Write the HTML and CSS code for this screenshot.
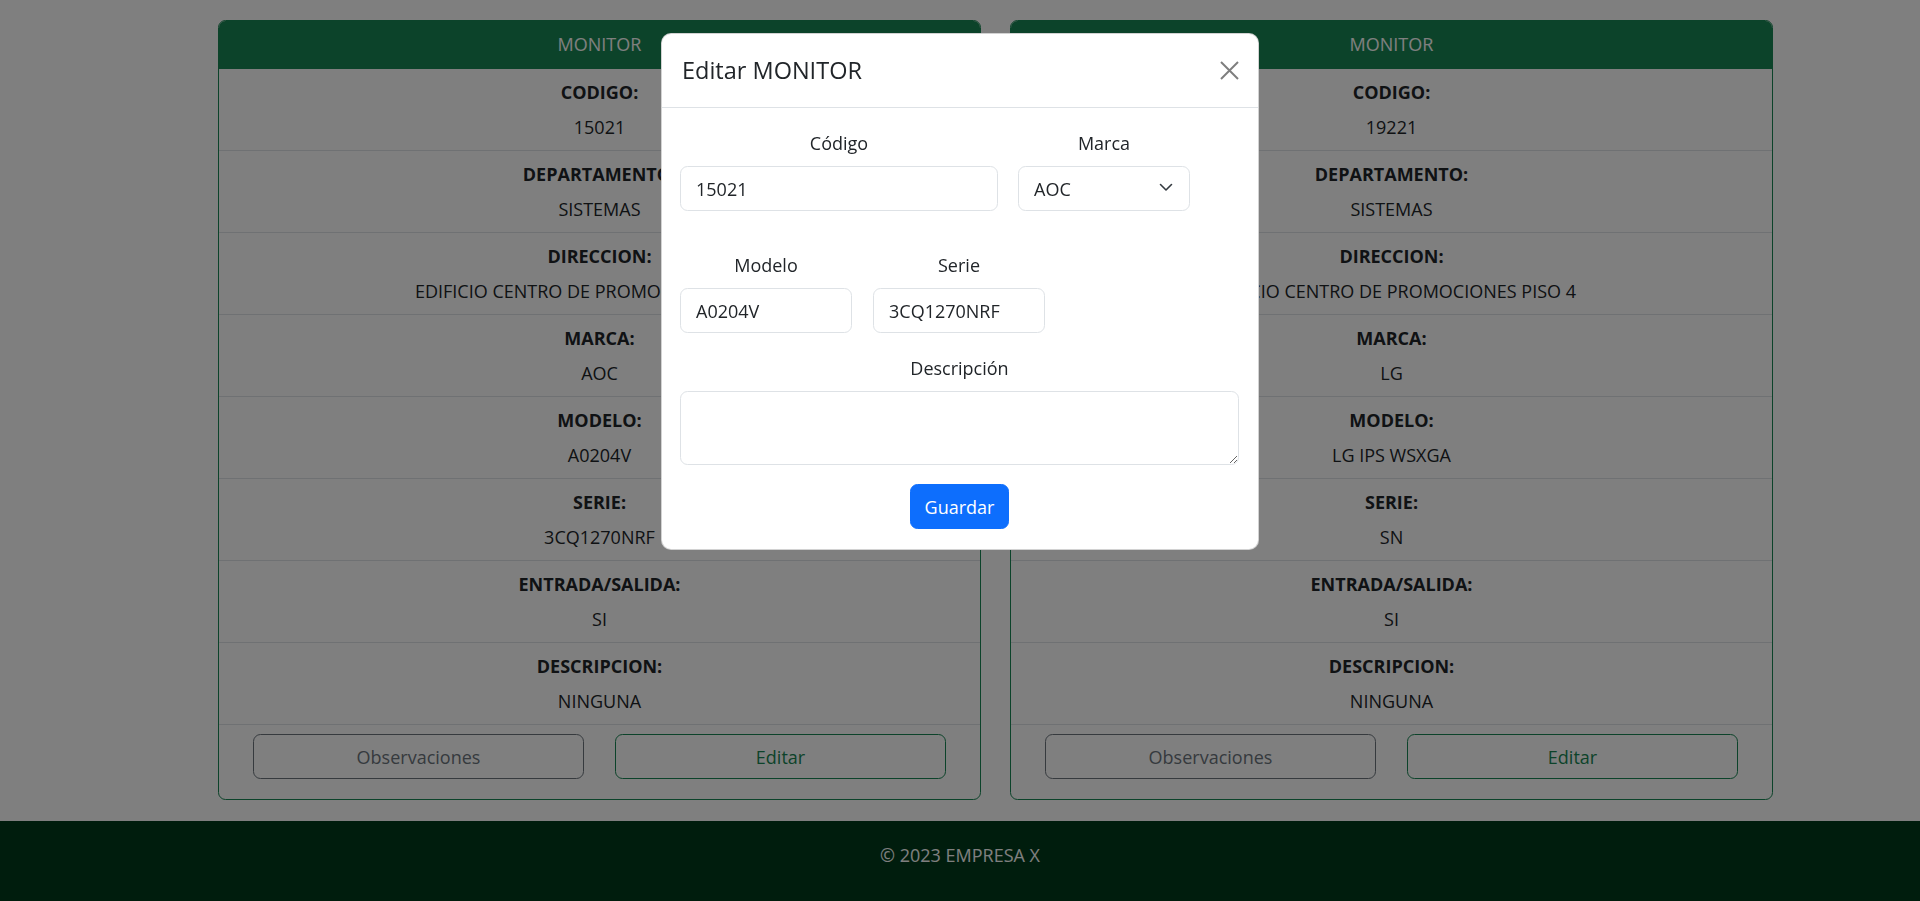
FILE: index.html
```html
<!DOCTYPE html>
<html lang="es">
<head>
<meta charset="utf-8">
<title>Equipos</title>
<link rel="stylesheet" href="styles.css">
</head>
<body>
<main class="page">
  <div class="cards">
    <section class="card">
      <header class="card-header">MONITOR</header>
      <ul class="fields">
        <li class="field"><span class="field-label">CODIGO:</span><span class="field-value">15021</span></li>
        <li class="field"><span class="field-label">DEPARTAMENTO:</span><span class="field-value">SISTEMAS</span></li>
        <li class="field"><span class="field-label">DIRECCION:</span><span class="field-value">EDIFICIO CENTRO DE PROMOCIONES PISO 4</span></li>
        <li class="field"><span class="field-label">MARCA:</span><span class="field-value">AOC</span></li>
        <li class="field"><span class="field-label">MODELO:</span><span class="field-value">A0204V</span></li>
        <li class="field"><span class="field-label">SERIE:</span><span class="field-value">3CQ1270NRF</span></li>
        <li class="field"><span class="field-label">ENTRADA/SALIDA:</span><span class="field-value">SI</span></li>
        <li class="field"><span class="field-label">DESCRIPCION:</span><span class="field-value">NINGUNA</span></li>
      </ul>
      <div class="card-actions">
        <button class="btn btn-outline-secondary" type="button">Observaciones</button>
        <button class="btn btn-outline-success" type="button">Editar</button>
      </div>
    </section>
    <section class="card">
      <header class="card-header">MONITOR</header>
      <ul class="fields">
        <li class="field"><span class="field-label">CODIGO:</span><span class="field-value">19221</span></li>
        <li class="field"><span class="field-label">DEPARTAMENTO:</span><span class="field-value">SISTEMAS</span></li>
        <li class="field"><span class="field-label">DIRECCION:</span><span class="field-value">EDIFICIO CENTRO DE PROMOCIONES PISO 4</span></li>
        <li class="field"><span class="field-label">MARCA:</span><span class="field-value">LG</span></li>
        <li class="field"><span class="field-label">MODELO:</span><span class="field-value">LG IPS WSXGA</span></li>
        <li class="field"><span class="field-label">SERIE:</span><span class="field-value">SN</span></li>
        <li class="field"><span class="field-label">ENTRADA/SALIDA:</span><span class="field-value">SI</span></li>
        <li class="field"><span class="field-label">DESCRIPCION:</span><span class="field-value">NINGUNA</span></li>
      </ul>
      <div class="card-actions">
        <button class="btn btn-outline-secondary" type="button">Observaciones</button>
        <button class="btn btn-outline-success" type="button">Editar</button>
      </div>
    </section>
  </div>
</main>
<footer class="site-footer">© 2023 EMPRESA X</footer>

<div class="backdrop"></div>
<div class="modal-wrap">
  <div class="modal">
    <div class="modal-header">
      <h5 class="modal-title">Editar MONITOR</h5>
      <button class="btn-close" type="button" aria-label="Cerrar">
        <svg width="19" height="19" viewBox="0 0 19 19"><path d="M1 1L18 18M18 1L1 18" stroke="#000" stroke-width="2" fill="none"/></svg>
      </button>
    </div>
    <form class="modal-body">
      <div class="form-row">
        <label class="form-group w-codigo"><span class="form-label">Código</span><input class="form-control" type="text" value="15021"></label>
        <label class="form-group w-small"><span class="form-label">Marca</span>
          <span class="select-wrap">
            <select class="form-control form-select"><option>AOC</option><option>LG</option></select>
            <svg class="chevron" width="14" height="9" viewBox="0 0 14 9"><path d="M1.5 1.5l5.5 5.5 5.5-5.5" fill="none" stroke="#343a40" stroke-width="1.6" stroke-linecap="round" stroke-linejoin="round"/></svg>
          </span>
        </label>
      </div>
      <div class="form-row row-gap-lg">
        <label class="form-group w-small"><span class="form-label">Modelo</span><input class="form-control" type="text" value="A0204V"></label>
        <label class="form-group w-small"><span class="form-label">Serie</span><input class="form-control" type="text" value="3CQ1270NRF"></label>
      </div>
      <label class="form-group form-full"><span class="form-label">Descripción</span><textarea class="form-control form-textarea"></textarea></label>
      <div class="form-submit"><button class="btn btn-primary" type="button">Guardar</button></div>
    </form>
  </div>
</div>
</body>
</html>
```
FILE: styles.css
```css
* { box-sizing: border-box; }
html, body { margin: 0; padding: 0; }
body {
  font-family: "Open Sans", "Noto Sans", sans-serif;
  font-size: 18px;
  line-height: 30px;
  color: #212529;
  background: #ffffff;
  min-height: 901px;
  display: flex;
  flex-direction: column;
}
.page { padding: 20px 0 21px 218px; }
.cards {
  display: grid;
  grid-template-columns: 763px 763px;
  column-gap: 29px;
}
.card {
  border: 1px solid #198754;
  border-radius: 7.5px;
  background: #fff;
  overflow: hidden;
}
.card-header {
  height: 48px;
  background: #198754;
  color: #fff;
  text-align: center;
  line-height: 47px;
  border-bottom: 1px solid #198754;
}
.fields { list-style: none; margin: 0; padding: 0; }
.field {
  display: flex;
  flex-direction: column;
  align-items: center;
  gap: 5px;
  padding: 8px 16px;
  border-bottom: 1px solid #dee2e6;
}
.field-label { font-weight: 700; }
.card-actions {
  display: grid;
  grid-template-columns: 331px 331px;
  column-gap: 31px;
  padding: 9px 34px 20px;
}
.btn {
  font-family: inherit;
  font-size: 18px;
  height: 45px;
  border-radius: 7.5px;
  border: 1px solid transparent;
  background: transparent;
  padding: 0 15px;
  cursor: pointer;
}
.btn-outline-secondary { border-color: #6c757d; color: #6c757d; }
.btn-outline-success { border-color: #198754; color: #198754; }
.btn-primary { background: #0d6efd; border-color: #0d6efd; color: #fff; width: 99px; padding: 0; }

.site-footer {
  flex: 1;
  background: #003a1a;
  color: #fff;
  text-align: center;
  padding: 19px 0 40px;
}

.backdrop {
  position: fixed;
  inset: 0;
  background: rgba(0, 0, 0, 0.5);
  z-index: 10;
}
.modal-wrap {
  position: fixed;
  inset: 0;
  z-index: 20;
  display: flex;
  justify-content: center;
  align-items: flex-start;
  padding-top: 33px;
}
.modal {
  width: 598px;
  background: #fff;
  border: 1px solid rgba(0, 0, 0, 0.175);
  border-radius: 10px;
}
.modal-header {
  display: flex;
  align-items: center;
  justify-content: space-between;
  padding: 19px 19px 19px 20px;
  border-bottom: 1px solid #dee2e6;
}
.modal-title {
  margin: 0;
  font-size: 23.5px;
  font-weight: 500;
  line-height: 35px;
}
.btn-close {
  border: 0;
  background: transparent;
  padding: 0;
  width: 19px;
  height: 19px;
  opacity: 0.5;
  display: flex;
  cursor: pointer;
}
.modal-body { padding: 20px 19px 20px 18px; margin: 0; }
.form-row { display: flex; gap: 20px; }
.row-gap-lg { margin-top: 39px; gap: 21px; }
.form-group { display: flex; flex-direction: column; }
.w-codigo { width: 318px; }
.w-small { width: 172px; }
.form-full { margin-top: 20px; }
.form-label { text-align: center; margin-bottom: 8px; }
.form-control {
  font-family: inherit;
  font-size: 18px;
  color: #212529;
  height: 45px;
  width: 100%;
  padding: 0 15px;
  border: 1px solid #dee2e6;
  border-radius: 7.5px;
  background: #fff;
  outline: none;
}
.select-wrap { position: relative; display: block; }
.form-select { appearance: none; -webkit-appearance: none; padding-right: 45px; }
.chevron { position: absolute; right: 17px; top: 17px; pointer-events: none; }
.form-textarea { height: 74px; resize: vertical; padding: 8px 15px; display: block; }
.form-submit { display: flex; justify-content: center; margin-top: 19px; }
```
